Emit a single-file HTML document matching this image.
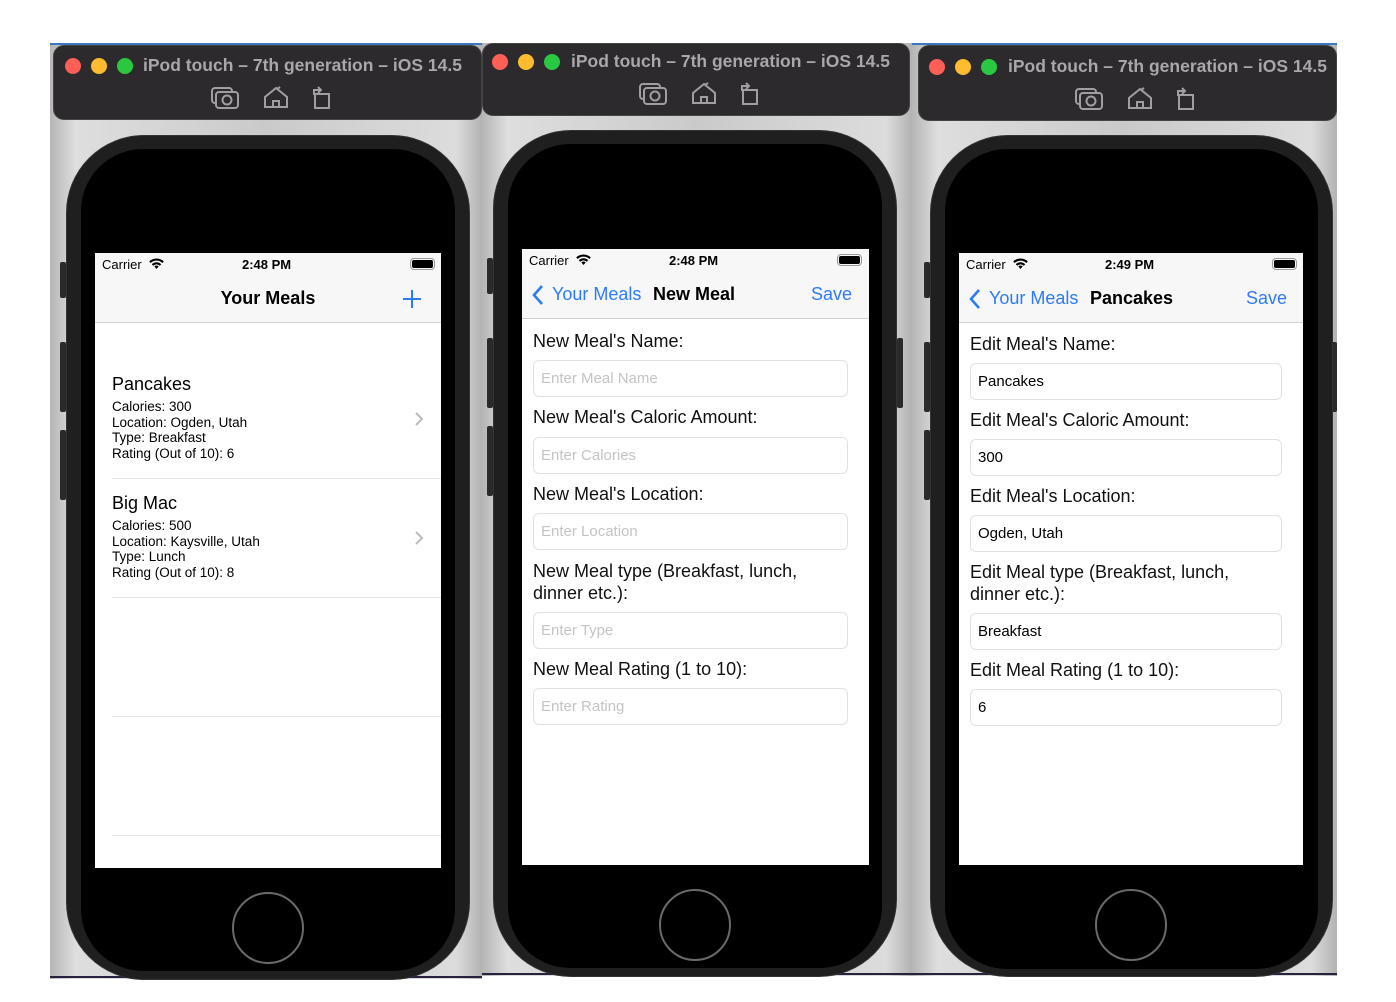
<!DOCTYPE html>
<html><head><meta charset="utf-8"><style>
*{margin:0;padding:0;box-sizing:border-box}
body{width:1396px;height:1002px;background:#fff;position:relative;overflow:hidden;font-family:"Liberation Sans",sans-serif}
.a{position:absolute}
.bg{position:absolute;background:linear-gradient(90deg,#b5b5b5 0%,#dedede 6%,#cacaca 50%,#dcdcdc 94%,#b2b2b2 100%)}
.tb{position:absolute;background:#2c2a2c;border-radius:11px;border:1px solid #444}
.dot{position:absolute;width:16px;height:16px;border-radius:50%;top:-8px}
.ttl{position:absolute;color:#a9a7a9;font-weight:bold;font-size:17.5px;white-space:nowrap;line-height:20px}
.ph{position:absolute;background:#1f1f1f;border-radius:78px;border:1px solid #333}
.in{position:absolute;background:#000;border-radius:62px}
.scr{position:absolute;background:#fff;overflow:hidden}
.sb{position:absolute;left:0;right:0;top:0;height:70px;background:#f7f7f7;border-bottom:1px solid #cfcfcf}
.t{position:absolute;white-space:nowrap}
.hb{position:absolute;width:72px;height:72px;border-radius:50%;border:2px solid #6a6a6a}
.btn{position:absolute;width:6px;background:#2a2a2a;border-radius:2px}
.lbl{position:absolute;font-size:18px;color:#111;line-height:22px;white-space:nowrap}
.fld{position:absolute;height:37px;border:1px solid #e1e1e1;border-radius:6px;font-size:15px;line-height:35px;padding-left:7px}
.ph1{color:#c4c4c7}
.blue{color:#2d7cf6}
.det{font-size:13.5px;line-height:15.5px}
</style></head><body>

<!-- PANEL 1 -->
<div class="bg" style="left:50px;top:43px;width:432px;height:936px"></div>
<div class="a" style="left:50px;top:43px;width:432px;height:2px;background:#3a78c0"></div>
<div class="a" style="left:50px;top:976px;width:432px;height:2px;background:#2a2040"></div>
<div class="tb" style="left:53px;top:45px;width:429px;height:75px">
 <div class="dot" style="left:11px;top:12px;background:#fe5f57"></div>
 <div class="dot" style="left:37px;top:12px;background:#febc2e"></div>
 <div class="dot" style="left:63px;top:12px;background:#29c840"></div>
 <div class="ttl" style="left:89px;top:9px">iPod touch – 7th generation – iOS 14.5</div>
 <svg class="a" style="left:156px;top:39px" width="140" height="26" viewBox="0 0 140 26" fill="none" stroke="#a09ea0" stroke-width="2">
  <rect x="2" y="3" width="20" height="15" rx="3"/><rect x="6" y="7" width="22" height="16" rx="3" fill="#2c2a2c"/><circle cx="17" cy="15" r="4.5"/>
  <path d="M55 22V12l11-9 11 9v10zM63 22v-6h6v6" /><path d="M67 4l3 -2"/>
  <path d="M105 9h14v14h-14z"/><path d="M104 10V5h6M108 2l3 3-3 3"/>
 </svg>
</div>
<div class="btn" style="left:60px;top:262px;height:36px"></div>
<div class="btn" style="left:60px;top:342px;height:70px"></div>
<div class="btn" style="left:60px;top:430px;height:70px"></div>
<div class="ph" style="left:66px;top:135px;width:404px;height:845px"></div>
<div class="in" style="left:81px;top:149px;width:374px;height:822px"></div>
<div class="scr" style="left:95px;top:253px;width:346px;height:615px">
 <div class="sb"></div>
 <div class="t" style="left:7px;top:4px;font-size:13px">Carrier</div>
 <svg class="a" style="left:53px;top:4px" width="17" height="13" viewBox="0 0 17 13"><path d="M8.5 12l2.2-2.6a3.2 3.2 0 0 0-4.4 0zM3.8 7.2a6.7 6.7 0 0 1 9.4 0l-1.4 1.6a4.6 4.6 0 0 0-6.6 0zM1.2 4.4a10.5 10.5 0 0 1 14.6 0l-1.4 1.6a8.4 8.4 0 0 0-11.8 0z" fill="#000"/></svg>
 <div class="t" style="left:147px;top:4px;font-size:13px;font-weight:bold">2:48 PM</div>
 <div class="a" style="left:315px;top:5px;width:25px;height:12px;border:1px solid #999;border-radius:4px;padding:1px"><div style="background:#000;height:100%;border-radius:2px"></div></div>
 <div class="t" style="left:0;width:346px;text-align:center;top:35px;font-size:18px;font-weight:bold">Your Meals</div>
 <svg class="a" style="left:307px;top:36px" width="20" height="20"><path d="M10 1v18M1 10h18" stroke="#2d7cf6" stroke-width="2"/></svg>
 <div class="t" style="left:17px;top:121px;font-size:18px">Pancakes</div>
 <div class="t det" style="left:17px;top:146px">Calories: 300<br>Location: Ogden, Utah<br>Type: Breakfast<br>Rating (Out of 10): 6</div>
 <svg class="a" style="left:319px;top:158px" width="10" height="16"><path d="M2 2l6 6-6 6" stroke="#bbb" stroke-width="2" fill="none"/></svg>
 <div class="a" style="left:17px;right:0;top:225px;height:1px;background:#e3e3e3"></div>
 <div class="t" style="left:17px;top:240px;font-size:18px">Big Mac</div>
 <div class="t det" style="left:17px;top:265px">Calories: 500<br>Location: Kaysville, Utah<br>Type: Lunch<br>Rating (Out of 10): 8</div>
 <svg class="a" style="left:319px;top:277px" width="10" height="16"><path d="M2 2l6 6-6 6" stroke="#bbb" stroke-width="2" fill="none"/></svg>
 <div class="a" style="left:17px;right:0;top:344px;height:1px;background:#e3e3e3"></div>
 <div class="a" style="left:17px;right:0;top:463px;height:1px;background:#e3e3e3"></div>
 <div class="a" style="left:17px;right:0;top:582px;height:1px;background:#e3e3e3"></div>
</div>
<div class="hb" style="left:232px;top:892px"></div>

<!-- PANEL 2 -->
<div class="bg" style="left:482px;top:43px;width:430px;height:933px"></div>
<div class="a" style="left:482px;top:973px;width:430px;height:2px;background:#2a2040"></div>
<div class="tb" style="left:482px;top:43px;width:428px;height:73px">
 <div class="dot" style="left:9px;top:10px;background:#fe5f57"></div>
 <div class="dot" style="left:35px;top:10px;background:#febc2e"></div>
 <div class="dot" style="left:61px;top:10px;background:#29c840"></div>
 <div class="ttl" style="left:88px;top:7px">iPod touch – 7th generation – iOS 14.5</div>
 <svg class="a" style="left:155px;top:37px" width="140" height="26" viewBox="0 0 140 26" fill="none" stroke="#a09ea0" stroke-width="2">
  <rect x="2" y="3" width="20" height="15" rx="3"/><rect x="6" y="7" width="22" height="16" rx="3" fill="#2c2a2c"/><circle cx="17" cy="15" r="4.5"/>
  <path d="M55 22V12l11-9 11 9v10zM63 22v-6h6v6" /><path d="M67 4l3 -2"/>
  <path d="M105 9h14v14h-14z"/><path d="M104 10V5h6M108 2l3 3-3 3"/>
 </svg>
</div>
<div class="btn" style="left:487px;top:258px;height:36px"></div>
<div class="btn" style="left:487px;top:338px;height:70px"></div>
<div class="btn" style="left:487px;top:426px;height:70px"></div>
<div class="btn" style="left:897px;top:338px;height:70px"></div>
<div class="ph" style="left:493px;top:130px;width:404px;height:847px"></div>
<div class="in" style="left:508px;top:144px;width:374px;height:824px"></div>
<div class="scr" style="left:522px;top:249px;width:347px;height:616px">
 <div class="sb"></div>
 <div class="t" style="left:7px;top:4px;font-size:13px">Carrier</div>
 <svg class="a" style="left:53px;top:4px" width="17" height="13" viewBox="0 0 17 13"><path d="M8.5 12l2.2-2.6a3.2 3.2 0 0 0-4.4 0zM3.8 7.2a6.7 6.7 0 0 1 9.4 0l-1.4 1.6a4.6 4.6 0 0 0-6.6 0zM1.2 4.4a10.5 10.5 0 0 1 14.6 0l-1.4 1.6a8.4 8.4 0 0 0-11.8 0z" fill="#000"/></svg>
 <div class="t" style="left:147px;top:4px;font-size:13px;font-weight:bold">2:48 PM</div>
 <div class="a" style="left:315px;top:5px;width:25px;height:12px;border:1px solid #999;border-radius:4px;padding:1px"><div style="background:#000;height:100%;border-radius:2px"></div></div>
 <svg class="a" style="left:9px;top:35px" width="14" height="22"><path d="M11 2L3 11l8 9" stroke="#2d7cf6" stroke-width="2.6" fill="none"/></svg>
 <div class="t blue" style="left:30px;top:35px;font-size:18px">Your Meals</div>
 <div class="t" style="left:131px;top:35px;font-size:18px;font-weight:bold">New Meal</div>
 <div class="t blue" style="left:289px;top:35px;font-size:18px">Save</div>
</div>
<div class="lbl" style="left:533px;top:330px">New Meal's Name:</div>
<div class="fld ph1" style="left:533px;top:360px;width:315px">Enter Meal Name</div>
<div class="lbl" style="left:533px;top:406px">New Meal's Caloric Amount:</div>
<div class="fld ph1" style="left:533px;top:437px;width:315px">Enter Calories</div>
<div class="lbl" style="left:533px;top:483px">New Meal's Location:</div>
<div class="fld ph1" style="left:533px;top:513px;width:315px">Enter Location</div>
<div class="lbl" style="left:533px;top:560px">New Meal type (Breakfast, lunch,<br>dinner etc.):</div>
<div class="fld ph1" style="left:533px;top:612px;width:315px">Enter Type</div>
<div class="lbl" style="left:533px;top:658px">New Meal Rating (1 to 10):</div>
<div class="fld ph1" style="left:533px;top:688px;width:315px">Enter Rating</div>
<div class="hb" style="left:659px;top:889px"></div>

<!-- PANEL 3 -->
<div class="bg" style="left:912px;top:43px;width:425px;height:933px"></div>
<div class="a" style="left:912px;top:43px;width:425px;height:2px;background:#3a78c0"></div>
<div class="a" style="left:912px;top:973px;width:425px;height:2px;background:#2a2040"></div>
<div class="tb" style="left:918px;top:45px;width:419px;height:76px">
 <div class="dot" style="left:10px;top:13px;background:#fe5f57"></div>
 <div class="dot" style="left:36px;top:13px;background:#febc2e"></div>
 <div class="dot" style="left:62px;top:13px;background:#29c840"></div>
 <div class="ttl" style="left:89px;top:10px">iPod touch – 7th generation – iOS 14.5</div>
 <svg class="a" style="left:155px;top:40px" width="140" height="26" viewBox="0 0 140 26" fill="none" stroke="#a09ea0" stroke-width="2">
  <rect x="2" y="3" width="20" height="15" rx="3"/><rect x="6" y="7" width="22" height="16" rx="3" fill="#2c2a2c"/><circle cx="17" cy="15" r="4.5"/>
  <path d="M55 22V12l11-9 11 9v10zM63 22v-6h6v6" /><path d="M67 4l3 -2"/>
  <path d="M105 9h14v14h-14z"/><path d="M104 10V5h6M108 2l3 3-3 3"/>
 </svg>
</div>
<div class="btn" style="left:924px;top:262px;height:36px"></div>
<div class="btn" style="left:924px;top:342px;height:70px"></div>
<div class="btn" style="left:924px;top:430px;height:70px"></div>
<div class="btn" style="left:1331px;top:342px;height:70px"></div>
<div class="ph" style="left:930px;top:135px;width:403px;height:842px"></div>
<div class="in" style="left:945px;top:149px;width:373px;height:820px"></div>
<div class="scr" style="left:959px;top:253px;width:344px;height:612px">
 <div class="sb"></div>
 <div class="t" style="left:7px;top:4px;font-size:13px">Carrier</div>
 <svg class="a" style="left:53px;top:4px" width="17" height="13" viewBox="0 0 17 13"><path d="M8.5 12l2.2-2.6a3.2 3.2 0 0 0-4.4 0zM3.8 7.2a6.7 6.7 0 0 1 9.4 0l-1.4 1.6a4.6 4.6 0 0 0-6.6 0zM1.2 4.4a10.5 10.5 0 0 1 14.6 0l-1.4 1.6a8.4 8.4 0 0 0-11.8 0z" fill="#000"/></svg>
 <div class="t" style="left:146px;top:4px;font-size:13px;font-weight:bold">2:49 PM</div>
 <div class="a" style="left:313px;top:5px;width:25px;height:12px;border:1px solid #999;border-radius:4px;padding:1px"><div style="background:#000;height:100%;border-radius:2px"></div></div>
 <svg class="a" style="left:9px;top:35px" width="14" height="22"><path d="M11 2L3 11l8 9" stroke="#2d7cf6" stroke-width="2.6" fill="none"/></svg>
 <div class="t blue" style="left:30px;top:35px;font-size:18px">Your Meals</div>
 <div class="t" style="left:131px;top:35px;font-size:18px;font-weight:bold">Pancakes</div>
 <div class="t blue" style="left:287px;top:35px;font-size:18px">Save</div>
</div>
<div class="lbl" style="left:970px;top:333px">Edit Meal's Name:</div>
<div class="fld" style="left:970px;top:363px;width:312px">Pancakes</div>
<div class="lbl" style="left:970px;top:409px">Edit Meal's Caloric Amount:</div>
<div class="fld" style="left:970px;top:439px;width:312px">300</div>
<div class="lbl" style="left:970px;top:485px">Edit Meal's Location:</div>
<div class="fld" style="left:970px;top:515px;width:312px">Ogden, Utah</div>
<div class="lbl" style="left:970px;top:561px">Edit Meal type (Breakfast, lunch,<br>dinner etc.):</div>
<div class="fld" style="left:970px;top:613px;width:312px">Breakfast</div>
<div class="lbl" style="left:970px;top:659px">Edit Meal Rating (1 to 10):</div>
<div class="fld" style="left:970px;top:689px;width:312px">6</div>
<div class="hb" style="left:1095px;top:889px"></div>

</body></html>
